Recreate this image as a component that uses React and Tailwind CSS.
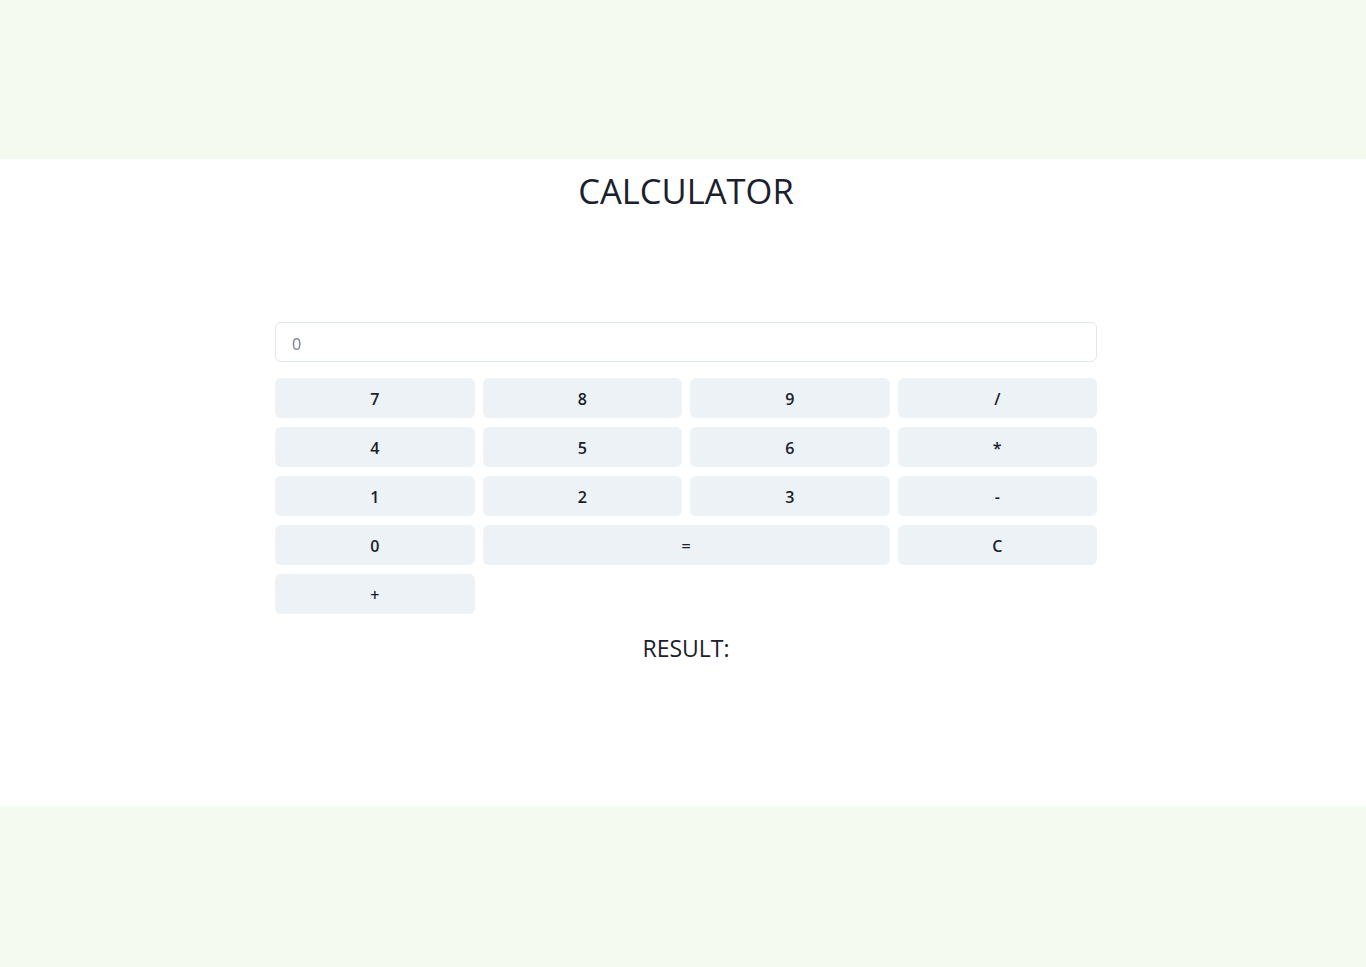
import { useState } from 'react';

const keys = [
  ['7', ''], ['8', ''], ['9', ''], ['/', ''],
  ['4', ''], ['5', ''], ['6', ''], ['*', ''],
  ['1', ''], ['2', ''], ['3', ''], ['-', ''],
  ['0', ''], ['=', 'col-span-2'], ['C', ''],
  ['+', ''],
];

const App = () => {
  const [value, setValue] = useState('');
  const [result, setResult] = useState('');

  const press = (k) => {
    if (k === 'C') {
      setValue('');
      setResult('');
    } else if (k === '=') {
      try {
        // eslint-disable-next-line no-new-func
        setResult(String(Function(`return (${value})`)()));
      } catch (e) {
        setResult('Error');
      }
    } else {
      setValue(value + k);
    }
  };

  return (
    <div className="min-h-screen bg-[#f5faf0] flex flex-col" style={{ fontFamily: '"Open Sans", "Noto Sans", sans-serif' }}>
      <div className="h-[159px]" />
      <div className="bg-white h-[647px] flex flex-col items-center pl-[6px]">
        <h1 className="mt-[12px] text-[34.5px] leading-[40px] text-[#1a202c]">CALCULATOR</h1>

        <div className="w-[822px] mt-[111px]">
          <input
            className="w-full h-10 rounded-md border border-[#e2e8f0] px-4 pt-[3px] text-[16px] text-[#4a5568] placeholder-[#718096] outline-none"
            placeholder="0"
            value={value}
            onChange={e => setValue(e.target.value)}
          />
          <div className="grid grid-cols-4 gap-x-2 gap-y-[9px] mt-4">
            {keys.map(([k, span]) => (
              <button
                key={k}
                onClick={() => press(k)}
                className={`${span} h-10 rounded-md bg-[#edf2f7] pt-[2px] text-[16px] font-semibold text-[#1a202c]`}
              >
                {k}
              </button>
            ))}
          </div>
          <p className="mt-[18px] text-center text-[23px] leading-[32px] text-[#1a202c]">RESULT: {result}</p>
        </div>
      </div>
      <div className="flex-1" />
    </div>
  );
};

export default App;
